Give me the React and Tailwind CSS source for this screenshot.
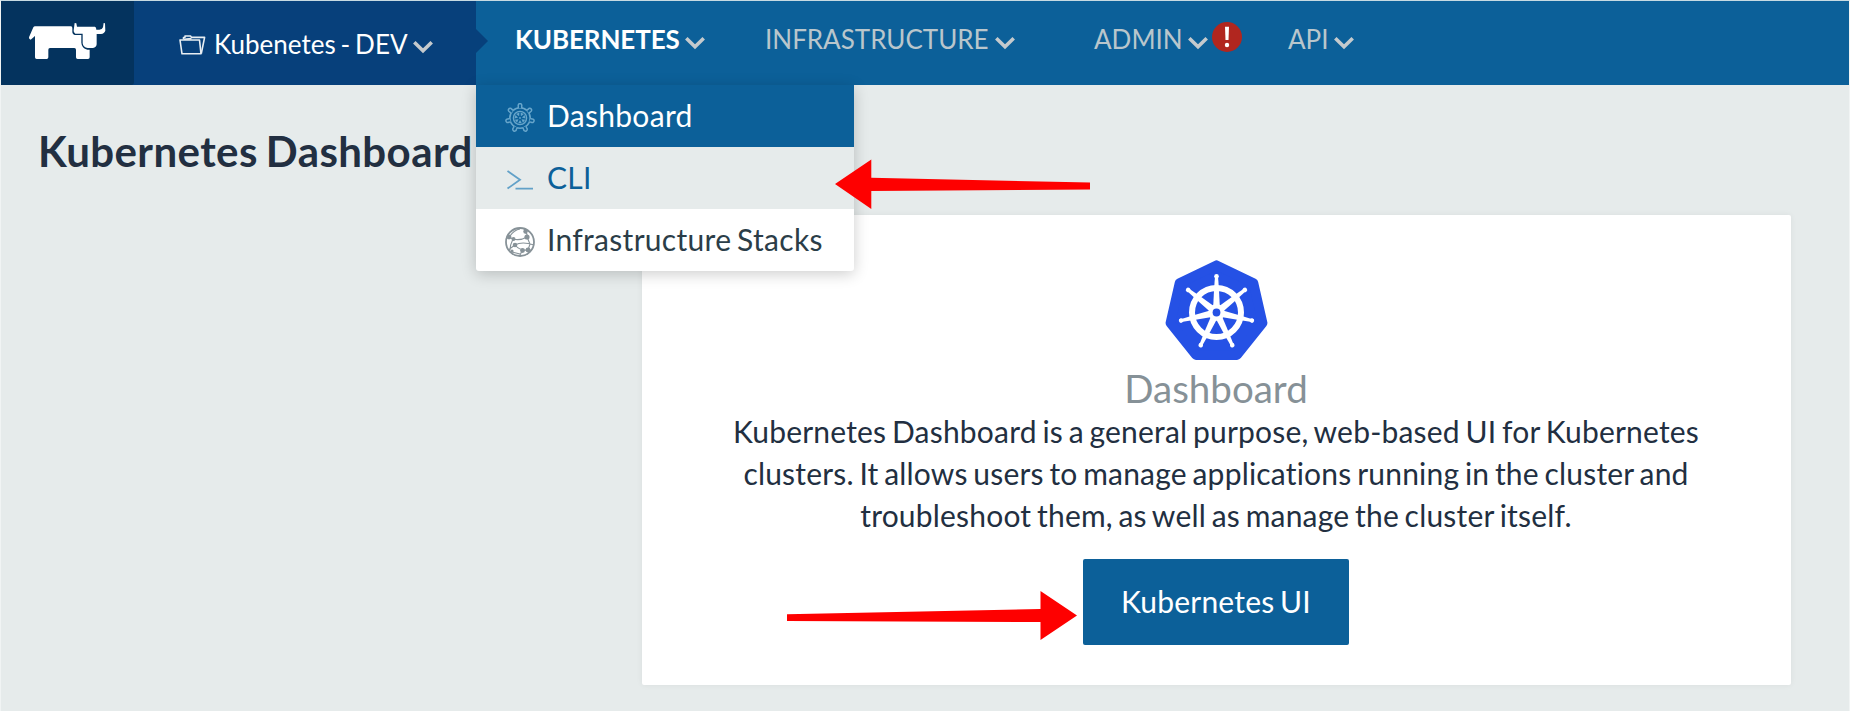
const SPOKES = [0, 1, 2, 3, 4, 5, 6].map((i) => (i * 360) / 7);
const point = (r, deg) => {
  const a = ((deg - 90) * Math.PI) / 180;
  return `${(r * Math.cos(a)).toFixed(2)},${(r * Math.sin(a)).toFixed(2)}`;
};

function CowLogo() {
  return (
    <svg viewBox="84 66 236 114" className="h-[38px] w-[78.67px]" fill="#fff">
      <path d="M105 79H213Q217 79 217 84V97Q218 105 224 105H244V128Q245 144 262 149H269V172Q269 177 264 177H233Q228 177 228 172V149Q228 144 223 144H150Q145 144 145 149V172q0 5-5 5H110q-5 0-5-5V108L92 119Q86 118 87 112L100 82Q102 79 105 79Z" />
      <path d="M224 69L229 70 231 80H285Q289 81 289 89H298Q307 89 309 82L311 69 315 70 316 92Q313 101 303 102H290V133Q289 143 279 144H263Q250 143 248 130V101H226Q220 99 221 91Z" />
    </svg>
  );
}

function Chevron() {
  return (
    <svg viewBox="0 0 20 14" className="h-[14px] w-5 shrink-0" fill="none" stroke="#c5cacd" strokeWidth="3.6">
      <path d="M1.3 2.3L10 10.7L18.7 2.3" />
    </svg>
  );
}

function FolderIcon() {
  return (
    <svg viewBox="0 0 27 20" className="h-5 w-[27px] shrink-0" fill="none" stroke="#e8eef3" strokeWidth="1.6" strokeLinejoin="round">
      <path d="M1 5H20.5L22 18.8H3Z" />
      <path d="M4.5 4.5V2.6L6 2.3V1H11.5L12.5 2.4H25.6L22.3 18.5" />
      <path d="M5 4.2L12.5 3.6" />
    </svg>
  );
}

function WheelIcon() {
  return (
    <svg viewBox="-15 -15 30 30" className="size-[30px] shrink-0" fill="none" stroke="#68a6cb" strokeWidth="1.6">
      <circle r="10.2" />
      <circle r="6.6" strokeWidth="1.4" />
      {SPOKES.map((d) => (
        <g key={d} transform={`rotate(${d})`}>
          <path d="M-1.7 -10V-12A1.8 1.8 0 1 1 1.7 -12V-10" fill="#0c6099" strokeWidth="1.5" />
          <path d="M0 -2L-1.8 -5.2H1.8Z" fill="#68a6cb" stroke="none" transform="rotate(25.7)" />
        </g>
      ))}
      <circle r=".9" fill="#68a6cb" stroke="none" />
    </svg>
  );
}

function PromptIcon() {
  return (
    <svg viewBox="0 0 28 20" className="h-5 w-[30px] shrink-0" fill="none" stroke="#62a1c8" strokeWidth="1.8">
      <path d="M1.5 1L14 9.8L1.5 18.6M9.5 18.7H27" />
    </svg>
  );
}

function GlobeIcon() {
  return (
    <svg viewBox="-15 -15 30 30" className="size-[30px] shrink-0" fill="none" stroke="#879298" strokeWidth="1.1">
      <circle r="14" strokeWidth="1.8" />
      <path d="M-11 -5L-7 -3Q0 -1 7 -5Q8 -8 5 -10L4 -14M-10 -6Q-6 -12 0 -13M-7 -3Q-10 3 -10 8M-5 3Q2 -1 14 3M-5 3L-12 8M-5 3Q0 9 8 8M7 -5L10 2L8 8M2 9L0 13M-8 10L0 12M8 8H12" />
      <g fill="#879298" stroke="none">
        <circle cx="-6.5" cy="-3" r="2" />
        <circle cx="7" cy="-5" r="2.6" />
        <circle cx="5.5" cy="-10.500" r="2.2" />
        <circle cx="-5" cy="3" r="2.3" />
        <circle cx="8" cy="8" r="2.4" />
        <circle cx="2.5" cy="8.500" r="2.4" />
        <circle cx="-11" cy="-5" r="2.4" />
        <circle cx="-8" cy="9" r="1.6" />
      </g>
    </svg>
  );
}

function KubernetesLogo() {
  return (
    <svg viewBox="-52.5 -52.5 104 104" className="mr-px size-[104px] shrink-0">
      <polygon points={SPOKES.map((d) => point(47.3, d)).join(" ")} fill="#2551e5" stroke="#2551e5" strokeWidth="9.6" strokeLinejoin="round" />
      <circle r="24.5" fill="none" stroke="#fff" strokeWidth="6" />
      {SPOKES.map((d) => (
        <g key={d} transform={`rotate(${d})`} fill="#fff">
          <path d="M-3.4 -4L-2.5 -22L-1.5 -36.5H1.5L2.5 -22L3.4 -4Z" />
          <circle cy="-36.3" r="2.3" />
        </g>
      ))}
      <circle r="8.2" fill="#fff" />
      <circle r="3.9" fill="#2551e5" />
    </svg>
  );
}

function NavItem({ label, width, active, children }) {
  return (
    <div className="flex items-center">
      <span className={`${width} -mt-[2px] whitespace-nowrap ${active ? "font-bold tracking-[-0.1px] text-white" : "text-[#b9c6cc]"}`}>{label}</span>
      <span className="mt-[7px]"><Chevron /></span>
      {children}
    </div>
  );
}

function MenuItem({ icon, label, className }) {
  return (
    <div className={`flex h-[62px] items-center gap-[12px] pl-[29px] text-[30px] leading-[60px] tracking-[0.3px] [word-spacing:-2.2px] ${className}`}>
      <span className="mt-[3px]">{icon}</span>
      <span className="-mt-[2px] whitespace-nowrap">{label}</span>
    </div>
  );
}

export default function App() {
  return (
    <div className="relative flex h-[711px] w-[1850px] flex-col overflow-hidden border-x border-t border-x-[#f1f4f4] border-t-[#c7dae2] bg-[#e6ebeb] font-['Lato',sans-serif] text-[#222f41]">
      <header className="-ml-px flex h-[84px] shrink-0 border-l border-l-[#8499a9] bg-[#0c6099] text-[26px] leading-[32px]">
        <div className="w-[133px] bg-[#07407b]">
          <div className="h-[84px] rounded-br-[3px] bg-[#04335e] pt-[21px] pl-[27px]">
            <CowLogo />
          </div>
        </div>
        <div className="flex w-[342px] items-center bg-[#07407b] pl-[45px] text-white">
          <span className="mt-[4px]"><FolderIcon /></span>
          <span className="mt-[1px] ml-[8px] w-[199px] [word-spacing:-1.8px] whitespace-nowrap">Kubenetes - DEV</span>
          <span className="mt-[7px]"><Chevron /></span>
        </div>
        <svg viewBox="0 0 12 24" className="mt-7 h-6 w-3" fill="#07407b">
          <path d="M0 0L12 12L0 24Z" />
        </svg>
        <nav className="flex h-[77px] items-center pl-[27px]">
          <NavItem label="KUBERNETES" width="w-[170px]" active />
          <div className="w-[60px]" />
          <NavItem label="INFRASTRUCTURE" width="w-[230px]" />
          <div className="w-[79px]" />
          <NavItem label="ADMIN" width="w-[94px]">
            <span className="mb-[6px] ml-[4px] flex size-[30px] items-center justify-center rounded-full bg-[#b1261f]">
              <svg viewBox="0 0 6 22" className="h-[22px] w-1.5" fill="#fff">
                <path d="M1 .8H5L4.5 14H1.5Z" />
                <circle cx="3" cy="19" r="2.2" />
              </svg>
            </span>
          </NavItem>
          <div className="w-[46px]" />
          <NavItem label="API" width="w-[46px]" />
        </nav>
      </header>

      <main className="flex grow flex-col">
        <h1 className="mt-[41px] pl-[37px] text-[42px] leading-[50px] font-bold tracking-[0.42px] [word-spacing:-2.6px] whitespace-nowrap">Kubernetes Dashboard</h1>
        <section className="mt-[39px] ml-[641px] flex h-[470px] w-[1149px] flex-col items-center rounded-[2px] bg-white pt-[45px] pr-px shadow-[0_0_6px_rgba(0,0,0,0.06)]">
          <KubernetesLogo />
          <h2 className="mt-px text-[38.5px] leading-[46px] text-[#869197]">Dashboard</h2>
          <p className="-mt-px text-center text-[30px] leading-[42px] tracking-[0.2px] [word-spacing:-2.2px] whitespace-nowrap">
            Kubernetes Dashboard is a general purpose, web-based UI for Kubernetes
            <br />
            clusters. It allows users to manage applications running in the cluster and
            <br />
            troubleshoot them, as well as manage the cluster itself.
          </p>
          <button className="mt-[23px] h-[86px] w-[266px] rounded-[2px] bg-[#0c6099] pb-[2px] text-[30px] tracking-[0.2px] [word-spacing:-2.2px] text-white">Kubernetes UI</button>
        </section>
      </main>

      <div className="absolute top-[84px] left-[475px] w-[377.5px] overflow-visible rounded-b-[3px] bg-white shadow-[0_3px_15px_rgba(0,0,0,0.2)]">
        <MenuItem icon={<WheelIcon />} label="Dashboard" className="bg-[#0c6099] text-white" />
        <MenuItem icon={<PromptIcon />} label="CLI" className="bg-[#e6ebeb] text-[#0c6099]" />
        <MenuItem icon={<GlobeIcon />} label="Infrastructure Stacks" className="text-[#2b3d48]" />
      </div>

      <svg viewBox="835 159 256 51" className="absolute top-[158px] left-[834px] h-[51px] w-[256px]" fill="#fe0000">
        <path d="M835 184L871.3 159.5V177.8L1090 182.5V189.5L871.3 191V209Z" />
      </svg>
      <svg viewBox="786 590 292 51" className="absolute top-[589px] left-[785px] h-[51px] w-[292px]" fill="#fe0000">
        <path d="M1077 615.5L1040.5 591V609L787 614.3V621L1040.5 622V640Z" />
      </svg>
    </div>
  );
}
